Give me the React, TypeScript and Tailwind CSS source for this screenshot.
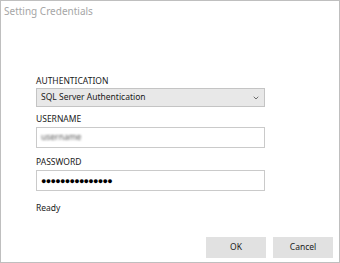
import { ChevronDown } from "lucide-react";

export default function App() {
  return (
    <div className="w-[340px] h-[263px] bg-white border border-[#bfbfbf] flex flex-col font-['Noto_Sans',sans-serif] text-[#1a1a1a]">
      <div className="pl-[3px] pt-[3px] text-[10px] text-[#a6a6a6] leading-[14px]">Setting Credentials</div>
      <div className="flex-1 flex flex-col pl-[35px] pr-[74px] pt-[57px]">
        <label className="text-[8.5px] leading-[12px] h-[13px]">AUTHENTICATION</label>
        <div className="h-[19px] border border-[#c4c4c4] bg-[#e8e8e8] flex items-center justify-between pl-[4px] pr-[4px] text-[8.5px]">
          <span>SQL Server Authentication</span>
          <ChevronDown size={8} strokeWidth={2.5} className="text-[#555]" />
        </div>
        <label className="mt-[6px] text-[8.5px] leading-[12px] h-[13px]">USERNAME</label>
        <div className="mt-[1px] h-[21px] border border-[#cacaca] bg-white flex items-center pl-[4px]">
          <span className="text-[8.5px] text-[#555] blur-[1px]">username</span>
        </div>
        <label className="mt-[8px] text-[8.5px] leading-[12px] h-[13px]">PASSWORD</label>
        <div className="mt-[1px] h-[21px] border border-[#cacaca] bg-white flex items-center pl-[4px]">
          <span className="text-[9px] tracking-[-0.7px] text-black">●●●●●●●●●●●●●●●</span>
        </div>
        <div className="mt-[11px] text-[8.5px] leading-[12px]">Ready</div>
      </div>
      <div className="flex justify-end gap-[7px] pr-[6px] pb-[4px]">
        <button className="w-[60px] h-[21px] bg-[#e1e1e1] text-[8.5px]">OK</button>
        <button className="w-[60px] h-[21px] bg-[#e1e1e1] text-[8.5px]">Cancel</button>
      </div>
    </div>
  );
}
